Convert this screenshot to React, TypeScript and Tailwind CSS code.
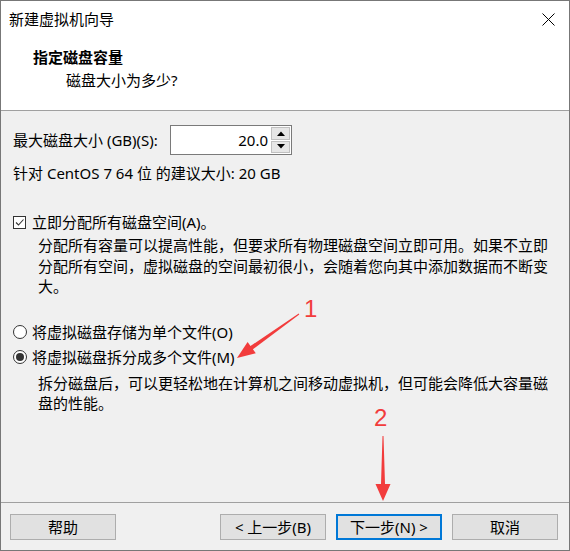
import React from "react";

const font = { fontFamily: "'Noto Sans', 'Noto Sans CJK SC', sans-serif" };

function Checkbox() {
  return (
    <span className="w-[13px] h-[13px] border border-[#333333] bg-white flex items-center justify-center shrink-0">
      <svg width="11" height="11" viewBox="0 0 11 11">
        <path d="M2 5.5 L4.5 8 L9.5 2.5" fill="none" stroke="#333" strokeWidth="1.1" />
      </svg>
    </span>
  );
}

function Radio({ checked }: { checked?: boolean }) {
  return (
    <span className="w-[14px] h-[14px] rounded-full border border-[#333333] bg-white flex items-center justify-center shrink-0">
      {checked && <span className="w-[8px] h-[8px] rounded-full bg-[#333333]" />}
    </span>
  );
}

function Btn({ children, primary }: { children: React.ReactNode; primary?: boolean }) {
  return (
    <div
      className={
        "w-[106px] h-[26px] flex items-center justify-center bg-[#e1e1e1] text-[15px] leading-[20px] text-black " +
        (primary ? "border-2 border-[#0078d7]" : "border border-[#adadad]")
      }
    >
      {children}
    </div>
  );
}

export default function App() {
  return (
    <div
      className="relative w-[570px] h-[551px] border border-[#777777] bg-[#f0f0f0] flex flex-col text-black"
      style={font}
    >
      {/* header */}
      <div className="h-[110px] bg-white border-b border-[#a0a0a0] flex flex-col shrink-0">
        <div className="h-[36px] flex items-center justify-between pl-[8px] pr-[14px]">
          <span className="text-[15px] leading-[20px]">新建虚拟机向导</span>
          <svg width="13" height="13" viewBox="0 0 13 13">
            <path d="M0.5 0.5 L12.5 12.5 M12.5 0.5 L0.5 12.5" stroke="#000" strokeWidth="1" />
          </svg>
        </div>
        <div className="pl-[32px] mt-[10px] text-[15px] leading-[20px] font-bold">指定磁盘容量</div>
        <div className="pl-[65px] mt-[3px] text-[15px] leading-[20px]">磁盘大小为多少?</div>
      </div>

      {/* body */}
      <div className="flex-1 pl-[12px] pr-[10px] text-[15px] leading-[20px]">
        <div className="mt-[14px] flex items-center">
          <span className="w-[157px] whitespace-nowrap">最大磁盘大小 (GB)(S):</span>
          <div className="w-[122px] h-[30px] border border-[#7a7a7a] bg-white flex">
            <div className="flex-1 flex items-center justify-end pr-[3px]">20.0</div>
            <div className="w-[20px] flex flex-col gap-[1px] py-[1px] pr-[1px]">
              <div className="flex-1 bg-[#e6e6e6] border border-[#c0c0c0] flex items-center justify-center">
                <svg width="8" height="5" viewBox="0 0 8 5">
                  <path d="M0 5 L4 0.5 L8 5 Z" fill="#000" />
                </svg>
              </div>
              <div className="flex-1 bg-[#e6e6e6] border border-[#c0c0c0] flex items-center justify-center">
                <svg width="8" height="5" viewBox="0 0 8 5">
                  <path d="M0 0 L4 4.5 L8 0 Z" fill="#000" />
                </svg>
              </div>
            </div>
          </div>
        </div>
        <div className="mt-[8px] whitespace-nowrap">针对 CentOS 7 64 位 的建议大小: 20 GB</div>

        <div className="mt-[29px] flex items-center gap-[6px]">
          <Checkbox />
          <span>立即分配所有磁盘空间(A)。</span>
        </div>
        <div className="mt-[3px] ml-[25px] leading-[20.5px] whitespace-nowrap">
          <div>分配所有容量可以提高性能，但要求所有物理磁盘空间立即可用。如果不立即</div>
          <div>分配所有空间，虚拟磁盘的空间最初很小，会随着您向其中添加数据而不断变</div>
          <div>大。</div>
        </div>

        <div className="mt-[25px] flex items-center gap-[5px]">
          <Radio />
          <span>将虚拟磁盘存储为单个文件(O)</span>
        </div>
        <div className="mt-[5px] flex items-center gap-[5px]">
          <Radio checked />
          <span>将虚拟磁盘拆分成多个文件(M)</span>
        </div>
        <div className="mt-[6px] ml-[25px] whitespace-nowrap">
          <div>拆分磁盘后，可以更轻松地在计算机之间移动虚拟机，但可能会降低大容量磁</div>
          <div>盘的性能。</div>
        </div>
      </div>

      {/* footer */}
      <div className="h-[48px] border-t border-[#a0a0a0] shrink-0 flex items-start pt-[11px] pl-[9px] pr-[11px]">
        <Btn>帮助</Btn>
        <div className="flex-1" />
        <div className="flex gap-[10px]">
          <Btn>&lt; 上一步(B)</Btn>
          <Btn primary>下一步(N) &gt;</Btn>
          <Btn>取消</Btn>
        </div>
      </div>

      {/* annotations */}
      <span className="absolute left-[303px] top-[295px] text-[24px] leading-[26px] text-[#f23c3c]" style={{ fontFamily: "'Liberation Sans', sans-serif" }}>1</span>
      <span className="absolute left-[373px] top-[404px] text-[24px] leading-[26px] text-[#f23c3c]" style={{ fontFamily: "'Liberation Sans', sans-serif" }}>2</span>
      <svg className="absolute left-0 top-0 pointer-events-none" width="570" height="551" viewBox="0 0 570 551">
        <polygon
          points="297.7,312.6 249.5,345.0 246.6,340.9 236,357 254.8,352.3 251.9,348.2 298.3,313.4"
          fill="#f23c3c"
        />
        <polygon points="381.5,435 380,483 374.5,483 382,500 389.5,483 384,483 382.5,435" fill="#f23c3c" />
      </svg>
    </div>
  );
}
